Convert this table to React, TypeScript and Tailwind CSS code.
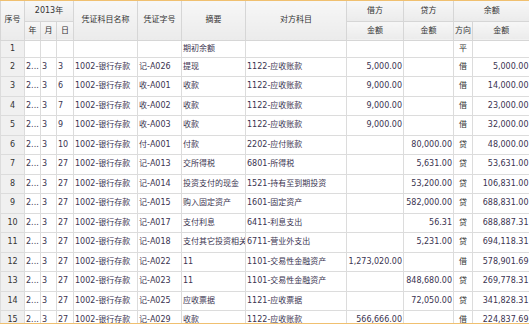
import React from 'react'

type Row = {
  no: number
  y: string
  m: string
  d: string
  acct: string
  voucher: string
  memo: string
  other: string
  debit: string
  credit: string
  dir: string
  bal: string
}

const B = '1002-银行存款'

const rows: Row[] = [
  { no: 1, y: '', m: '', d: '', acct: '', voucher: '', memo: '期初余额', other: '', debit: '', credit: '', dir: '平', bal: '' },
  { no: 2, y: '2...', m: '3', d: '3', acct: B, voucher: '记-A026', memo: '提现', other: '1122-应收账款', debit: '5,000.00', credit: '', dir: '借', bal: '5,000.00' },
  { no: 3, y: '2...', m: '3', d: '6', acct: B, voucher: '收-A001', memo: '收款', other: '1122-应收账款', debit: '9,000.00', credit: '', dir: '借', bal: '14,000.00' },
  { no: 4, y: '2...', m: '3', d: '7', acct: B, voucher: '收-A002', memo: '收款', other: '1122-应收账款', debit: '9,000.00', credit: '', dir: '借', bal: '23,000.00' },
  { no: 5, y: '2...', m: '3', d: '9', acct: B, voucher: '收-A003', memo: '收款', other: '1122-应收账款', debit: '9,000.00', credit: '', dir: '借', bal: '32,000.00' },
  { no: 6, y: '2...', m: '3', d: '10', acct: B, voucher: '付-A001', memo: '付款', other: '2202-应付账款', debit: '', credit: '80,000.00', dir: '贷', bal: '48,000.00' },
  { no: 7, y: '2...', m: '3', d: '27', acct: B, voucher: '记-A013', memo: '交所得税', other: '6801-所得税', debit: '', credit: '5,631.00', dir: '贷', bal: '53,631.00' },
  { no: 8, y: '2...', m: '3', d: '27', acct: B, voucher: '记-A014', memo: '投资支付的现金', other: '1521-持有至到期投资', debit: '', credit: '53,200.00', dir: '贷', bal: '106,831.00' },
  { no: 9, y: '2...', m: '3', d: '27', acct: B, voucher: '记-A015', memo: '购入固定资产', other: '1601-固定资产', debit: '', credit: '582,000.00', dir: '贷', bal: '688,831.00' },
  { no: 10, y: '2...', m: '3', d: '27', acct: B, voucher: '记-A017', memo: '支付利息', other: '6411-利息支出', debit: '', credit: '56.31', dir: '贷', bal: '688,887.31' },
  { no: 11, y: '2...', m: '3', d: '27', acct: B, voucher: '记-A018', memo: '支付其它投资相关', other: '6711-营业外支出', debit: '', credit: '5,231.00', dir: '贷', bal: '694,118.31' },
  { no: 12, y: '2...', m: '3', d: '27', acct: B, voucher: '记-A022', memo: '11', other: '1101-交易性金融资产', debit: '1,273,020.00', credit: '', dir: '借', bal: '578,901.69' },
  { no: 13, y: '2...', m: '3', d: '27', acct: B, voucher: '记-A023', memo: '11', other: '1101-交易性金融资产', debit: '', credit: '848,680.00', dir: '贷', bal: '269,778.31' },
  { no: 14, y: '2...', m: '3', d: '27', acct: B, voucher: '记-A025', memo: '应收票据', other: '1121-应收票据', debit: '', credit: '72,050.00', dir: '贷', bal: '341,828.31' },
  { no: 15, y: '2...', m: '3', d: '27', acct: B, voucher: '记-A029', memo: '收款', other: '1122-应收账款', debit: '566,666.00', credit: '', dir: '借', bal: '224,837.69' },
]

const th = 'border border-[#d6d6d6] bg-gradient-to-b from-[#f7f7f7] to-[#ebebeb] font-normal text-center p-0 overflow-hidden whitespace-nowrap'
const td = 'border border-[#dcdcdc] px-[1px] py-0 overflow-hidden whitespace-nowrap'

export default function App() {
  return (
    <div
      className="w-[529px] h-[324px] overflow-hidden bg-white border-t border-b border-[#f0c070] text-[8px] leading-none text-[#3a3350]"
      style={{ fontFamily: '"DejaVu Sans", "Noto Sans CJK SC", sans-serif' }}
    >
      <table className="table-fixed border-collapse w-[529px]">
        <colgroup>
          <col className="w-[24px]" />
          <col className="w-[16px]" />
          <col className="w-[16px]" />
          <col className="w-[17px]" />
          <col className="w-[64px]" />
          <col className="w-[44px]" />
          <col className="w-[64px]" />
          <col className="w-[101px]" />
          <col className="w-[57px]" />
          <col className="w-[50px]" />
          <col className="w-[19px]" />
          <col className="w-[57px]" />
        </colgroup>
        <thead className="text-[#333]">
          <tr className="h-[20px]">
            <th rowSpan={2} className={th + ' border-t-0'}>序号</th>
            <th colSpan={3} className={th + ' border-t-0'}>2013年</th>
            <th rowSpan={2} className={th + ' border-t-0'}>凭证科目名称</th>
            <th rowSpan={2} className={th + ' border-t-0'}>凭证字号</th>
            <th rowSpan={2} className={th + ' border-t-0'}>摘要</th>
            <th rowSpan={2} className={th + ' border-t-0'}>对方科目</th>
            <th className={th + ' border-t-0'}>借方</th>
            <th className={th + ' border-t-0'}>贷方</th>
            <th colSpan={2} className={th + ' border-t-0 border-r-0'}>余额</th>
          </tr>
          <tr className="h-[19px]">
            <th className={th}>年</th>
            <th className={th}>月</th>
            <th className={th}>日</th>
            <th className={th}>金额</th>
            <th className={th}>金额</th>
            <th className={th}>方向</th>
            <th className={th + ' border-r-0'}>金额</th>
          </tr>
        </thead>
        <tbody>
          {rows.map((r) => (
            <tr key={r.no} className={r.no === 1 ? 'h-[17px]' : 'h-[19.5px]'}>
              <td className={td + ' text-center bg-[#f0f0f0] text-[#333]'}>{r.no}</td>
              <td className={td}>{r.y}</td>
              <td className={td}>{r.m}</td>
              <td className={td}>{r.d}</td>
              <td className={td}>{r.acct}</td>
              <td className={td}>{r.voucher}</td>
              <td className={td}>{r.memo}</td>
              <td className={td}>{r.other}</td>
              <td className={td + ' text-right'}>{r.debit}</td>
              <td className={td + ' text-right'}>{r.credit}</td>
              <td className={td + ' text-center text-[#333]'}>{r.dir}</td>
              <td className={td + ' text-right border-r-0'}>{r.bal}</td>
            </tr>
          ))}
        </tbody>
      </table>
    </div>
  )
}
